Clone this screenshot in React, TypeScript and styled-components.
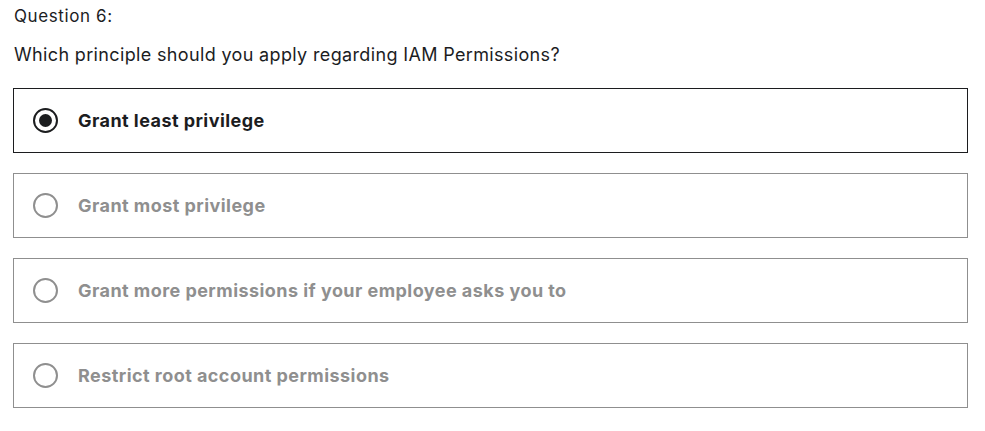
import React from "react";
import styled, { createGlobalStyle } from "styled-components";

const Global = createGlobalStyle`
  html, body { margin: 0; padding: 0; background: #ffffff; }
  body { font-family: "Inter", "Liberation Sans", Arial, sans-serif; color: #1c1d1f; }
`;

const Page = styled.div`
  padding: 6px 17px 0 13px;
  display: flex;
  flex-direction: column;
`;

const Heading = styled.div`
  font-size: 17px;
  line-height: 20px;
  letter-spacing: 0.6px;
  padding-left: 1px;
  margin-bottom: 18px;
`;

const Prompt = styled.div`
  font-size: 18px;
  line-height: 22px;
  letter-spacing: 0.35px;
  padding-left: 1px;
  margin-bottom: 22px;
`;

const Options = styled.div`
  display: flex;
  flex-direction: column;
  gap: 20px;
`;

const Option = styled.label<{ $selected: boolean }>`
  box-sizing: border-box;
  height: 65px;
  display: flex;
  align-items: center;
  gap: 20px;
  padding-left: 19px;
  border: 1px solid ${(p) => (p.$selected ? "#1c1d1f" : "#8f8f8f")};
  cursor: pointer;
`;

const Radio = styled.span<{ $selected: boolean }>`
  box-sizing: border-box;
  width: 25px;
  height: 25px;
  border-radius: 50%;
  border: 2px solid ${(p) => (p.$selected ? "#1c1d1f" : "#8f8f8f")};
  display: flex;
  align-items: center;
  justify-content: center;
  flex-shrink: 0;
  &::after {
    content: "";
    display: ${(p) => (p.$selected ? "block" : "none")};
    width: 13px;
    height: 13px;
    border-radius: 50%;
    background: #1c1d1f;
  }
`;

const OptionText = styled.span<{ $selected: boolean }>`
  font-weight: 700;
  font-size: 18px;
  letter-spacing: 0.45px;
  color: ${(p) => (p.$selected ? "#1c1d1f" : "#8f8f8f")};
`;

const answers = [
  "Grant least privilege",
  "Grant most privilege",
  "Grant more permissions if your employee asks you to",
  "Restrict root account permissions",
];

export default function App() {
  const selected = 0;
  return (
    <>
      <Global />
      <Page>
        <Heading>Question 6:</Heading>
        <Prompt>Which principle should you apply regarding IAM Permissions?</Prompt>
        <Options>
          {answers.map((a, i) => (
            <Option key={a} $selected={i === selected}>
              <Radio $selected={i === selected} />
              <OptionText $selected={i === selected}>{a}</OptionText>
            </Option>
          ))}
        </Options>
      </Page>
    </>
  );
}
